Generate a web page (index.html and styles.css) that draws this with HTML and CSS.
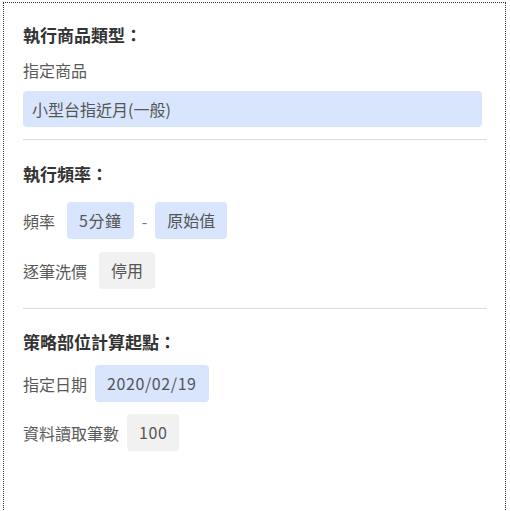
FILE: index.html
```html
<!DOCTYPE html>
<html lang="zh-Hant">
<head>
<meta charset="utf-8">
<link rel="stylesheet" href="styles.css">
</head>
<body>
<div class="panel">
  <section class="sec sec-1">
    <h2 class="title">執行商品類型：</h2>
    <div class="label">指定商品</div>
    <div class="input">小型台指近月(一般)</div>
  </section>
  <section class="sec sec-2">
    <h2 class="title">執行頻率：</h2>
    <div class="row row-first">
      <span class="label">頻率</span>
      <span class="chip chip-blue num">5分鐘</span>
      <span class="dash">-</span>
      <span class="chip chip-blue">原始值</span>
    </div>
    <div class="row">
      <span class="label">逐筆洗價</span>
      <span class="chip chip-grey">停用</span>
    </div>
  </section>
  <section class="sec sec-3">
    <h2 class="title">策略部位計算起點：</h2>
    <div class="row row-tight row-first">
      <span class="label">指定日期</span>
      <span class="chip chip-blue num">2020/02/19</span>
    </div>
    <div class="row row-tight">
      <span class="label">資料讀取筆數</span>
      <span class="chip chip-grey num">100</span>
    </div>
  </section>
</div>
</body>
</html>
```
FILE: styles.css
```css
html, body {
  margin: 0;
  padding: 0;
  background: #fff;
}
body {
  font-family: "Noto Sans CJK TC", "Noto Sans", sans-serif;
  color: #555;
  font-size: 16px;
}
.panel {
  margin: 2px 4px 0 3px;
  border: 1px dotted #333;
  padding: 0 18px 0 19px;
  min-height: 560px;
}
.sec {
  border-bottom: 1px solid #dcdcdc;
}
.sec-1 { padding: 20px 0 12px; }
.sec-2 { padding: 22px 0 19px; }
.sec-3 { padding: 21px 0 20px; border-bottom: none; }
.title {
  margin: 0;
  font-size: 17px;
  line-height: 24px;
  font-weight: 700;
  color: #333;
}
.label {
  font-size: 16px;
  line-height: 22px;
  color: #5a5a5a;
}
.sec-1 .label {
  margin-top: 12px;
}
.input {
  margin: 10px 5px 0 0;
  height: 36px;
  line-height: 36px;
  padding: 0 9px;
  background: #d8e5fc;
  border-radius: 4px;
  color: #555;
}
.row {
  display: flex;
  align-items: center;
  gap: 12px;
  margin-top: 13px;
}
.sec-2 .row-first { margin-top: 16px; }
.sec-3 .row-first { margin-top: 11px; }
.row-tight { gap: 8px; margin-top: 12px; }
.chip {
  display: inline-block;
  height: 37px;
  line-height: 37px;
  padding: 0 12px;
  border-radius: 4px;
  color: #555;
}
.num { letter-spacing: 0.6px; }
.chip-blue { background: #d8e5fc; }
.chip-grey { background: #f1f1f1; }
.dash {
  margin: 0 -4px;
  color: #777;
}
```
